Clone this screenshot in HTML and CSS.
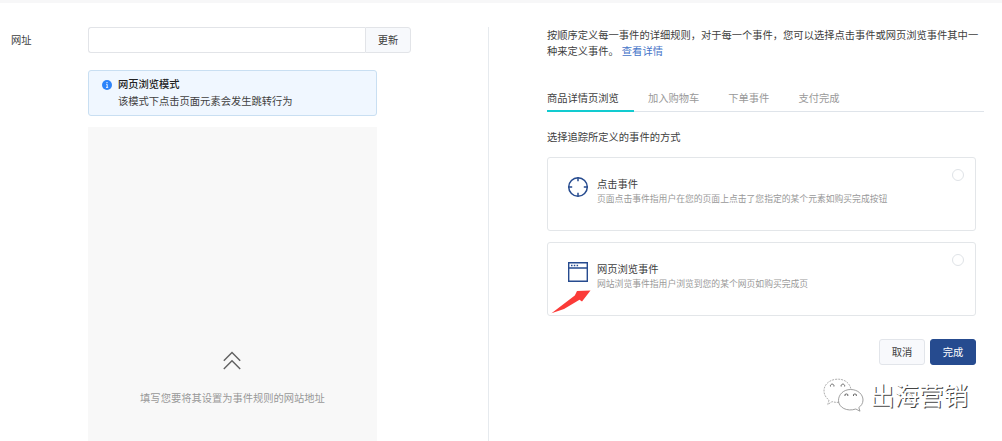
FILE: index.html
```html
<!DOCTYPE html>
<html lang="zh-CN">
<head>
  <meta charset="utf-8">
  <title>事件规则</title>
  <link rel="stylesheet" href="styles.css">
</head>
<body>
  <div class="page">
    <div class="left">
      <label class="url-label" for="url">网址</label>
      <div class="left-main">
        <div class="url-group">
          <input type="text" id="url" class="url-input">
          <button type="button" class="url-btn">更新</button>
        </div>

        <div class="notice">
          <svg class="notice-icon" viewBox="0 0 10 10">
            <circle cx="5" cy="5" r="5" fill="#2d84fa"/>
            <path d="M4.2 4.3H5.2V7.3M4 7.4H6.2" stroke="#fff" stroke-width="0.9" fill="none"/>
            <circle cx="5" cy="2.6" r="0.7" fill="#fff"/>
          </svg>
          <div>
            <div class="notice-title">网页浏览模式</div>
            <div>该模式下点击页面元素会发生跳转行为</div>
          </div>
        </div>

        <div class="preview">
          <svg class="preview-icon" viewBox="0 0 18 20">
            <path d="M0.8 9.8L9 1.6L17.2 9.8M0.8 18L9 9.8L17.2 18" stroke="#606060" stroke-width="1.4" fill="none"/>
          </svg>
          <p>填写您要将其设置为事件规则的网站地址</p>
        </div>
      </div>
    </div>

    <div class="right">
      <div class="intro">
        <p>按顺序定义每一事件的详细规则，对于每一个事件，您可以选择点击事件或网页浏览事件其中一</p>
        <div class="intro-end"><span>种来定义事件。</span><a class="more">查看详情</a></div>
      </div>

      <div class="tabs">
        <div class="tab active">商品详情页浏览</div>
        <div class="tab">加入购物车</div>
        <div class="tab">下单事件</div>
        <div class="tab">支付完成</div>
      </div>

      <div class="subtitle">选择追踪所定义的事件的方式</div>

      <div class="card">
        <svg class="card-icon" viewBox="0 0 22 22">
          <circle cx="11" cy="11" r="9.3" fill="none" stroke="#264b8f" stroke-width="1.5"/>
          <path d="M11 1.5V5.2M11 16.8V20.5M1.5 11H5.2M16.8 11H20.5" stroke="#264b8f" stroke-width="1.5"/>
        </svg>
        <div class="card-text">
          <div class="card-title">点击事件</div>
          <div class="card-desc">页面点击事件指用户在您的页面上点击了您指定的某个元素如购买完成按钮</div>
        </div>
        <span class="radio"></span>
      </div>

      <div class="card">
        <svg class="card-icon" viewBox="0 0 22 22">
          <path d="M1.7 1.7H20.3V20.3H1.7ZM1.7 7H20.3" fill="none" stroke="#264b8f" stroke-width="1.4"/>
          <path d="M4 4.4H5.5M6.8 4.4H8.3M9.6 4.4H11.1" stroke="#264b8f" stroke-width="1.5"/>
        </svg>
        <div class="card-text">
          <div class="card-title">网页浏览事件</div>
          <div class="card-desc">网站浏览事件指用户浏览到您的某个网页如购买完成页</div>
        </div>
        <span class="radio"></span>
        <svg class="arrow" viewBox="0 0 40 24">
          <path d="M0.5 23.3L23.8 5.5L26 1L39.5 0.4L31 11.5L28.5 9.8L13 19Z" fill="#fb3b38"/>
        </svg>
      </div>

      <div class="actions">
        <button type="button" class="btn">取消</button>
        <button type="button" class="btn primary">完成</button>
      </div>
    </div>
  </div>

  <div class="watermark">
    <svg class="wechat" viewBox="0 0 42 36">
      <g fill="#fff" stroke-width="0.8">
        <path stroke="#999" stroke-dasharray="2 1" d="M16 25.3C12.5 25.6 10.5 25 9 24.6L4.8 27.5L6 23C-2.5 17 0 4.5 12 2.4C21 1 27 6 28 12.5"/>
        <path stroke="#888" d="M27.5 12.5C35 12.5 40 17.5 40 23C40 26.5 38 29 35.8 30.5L37 34.2L32.8 32C24 35 15.5 30.5 15.5 23.5C15.5 17.5 20.5 12.5 27.5 12.5Z"/>
      </g>
      <g fill="none" stroke="#666" stroke-width="1">
        <path d="M7.5 9.5A1.8 1.8 0 1 1 10.9 9.5M18.2 9.5A1.8 1.8 0 1 1 21.6 9.5"/>
        <path d="M22 19A1.5 1.5 0 1 1 24.8 19M30.5 19A1.5 1.5 0 1 1 33.3 19"/>
      </g>
    </svg>
    <span>出海营销</span>
  </div>
</body>
</html>
```

FILE: styles.css
```css
* {
  box-sizing: border-box;
}

body {
  margin: 0;
  height: 441px;
  overflow: hidden;
  background: #fff;
  color: #404040;
  font-family: "Noto Sans CJK SC", sans-serif;
  font-size: 10.27px;
  line-height: 16px;
}

p {
  margin: 0;
}

button,
input {
  font: inherit;
  color: inherit;
}

.page {
  display: flex;
  height: 441px;
  padding-top: 24px;
  border-top: 3px solid #f7f7f8;
}

.left {
  display: flex;
  width: 489px;
  border-right: 1px solid #e6eaee;
}

.url-label {
  width: 88px;
  padding: 5px 0 0 11px;
}

.left-main {
  display: flex;
  flex-direction: column;
}

.url-group {
  display: flex;
  width: 323px;
  height: 26px;
}

.url-input {
  flex: 1;
  min-width: 0;
  border: 1px solid #e2e4e8;
  border-right: none;
  border-radius: 3px 0 0 3px;
}

.url-btn {
  width: 46px;
  padding: 0;
  border: 1px solid #e2e4e8;
  border-radius: 0 3px 3px 0;
  background: #f7f9fc;
}

.notice {
  display: flex;
  width: 289px;
  height: 46px;
  margin-top: 17px;
  padding: 4px 13px;
  border: 1px solid #c9dff2;
  border-radius: 3px;
  background: #f0f7ff;
  line-height: 17px;
}

.notice-icon {
  width: 10px;
  height: 10px;
  margin: 5px 6px 0 0;
}

.notice-title {
  color: #222;
  font-weight: 500;
}

.preview {
  flex: 1;
  width: 289px;
  margin-top: 11px;
  padding-top: 224px;
  background: #f8f8f8;
  color: #999;
  text-align: center;
}

.preview-icon {
  display: block;
  width: 18px;
  height: 20px;
  margin: 0 auto 19px 135px;
}

.right {
  width: 437px;
  margin-left: 58px;
}

.intro {
  height: 58px;
}

.intro-end {
  display: flex;
  gap: 3px;
}

.more {
  color: #4674c8;
}

.tabs {
  display: flex;
  gap: 29px;
  height: 27px;
  border-bottom: 1px solid #dfe4ea;
  color: #999;
}

.tab {
  height: 27px;
  padding-top: 5px;
}

.tab.active {
  width: 87px;
  margin-right: -15px;
  border-bottom: 2px solid #12cbd0;
  color: #404040;
}

.subtitle {
  margin: 17px 0 12px;
}

.card {
  position: relative;
  display: flex;
  width: 429px;
  height: 74px;
  margin-bottom: 11px;
  padding: 18px 11px 0 19px;
  border: 1px solid #e3e6e9;
  border-radius: 3px;
}

.card-icon {
  width: 22px;
  height: 22px;
}

.card-text {
  flex: 1;
  margin-left: 8px;
}

.card-title {
  line-height: 15px;
}

.card-desc {
  color: #999;
  font-size: 8.8px;
}

.radio {
  width: 12px;
  height: 12px;
  margin-top: -7px;
  border: 1px solid #dfe3e7;
  border-radius: 50%;
}

/* pointer drawn over the card's lower left corner */
.arrow {
  position: absolute;
  left: 3px;
  top: 47px;
  width: 40px;
  height: 24px;
}

.actions {
  display: flex;
  justify-content: flex-end;
  gap: 5px;
  width: 429px;
  margin-top: 23px;
}

.btn {
  width: 46px;
  height: 26px;
  padding: 0;
  border: 1px solid #e2e5ea;
  border-radius: 3px;
  background: #f8f9fc;
}

.btn.primary {
  border-color: #264b8f;
  background: #264b8f;
  color: #fff;
}

.watermark {
  position: absolute;
  left: 823px;
  top: 377px;
  display: flex;
  align-items: center;
  gap: 5px;
  color: #fff;
  font-size: 24.5px;
  line-height: 36px;
  text-shadow: 1px 1px 0 #444;
}

.wechat {
  width: 42px;
  height: 36px;
}
```
